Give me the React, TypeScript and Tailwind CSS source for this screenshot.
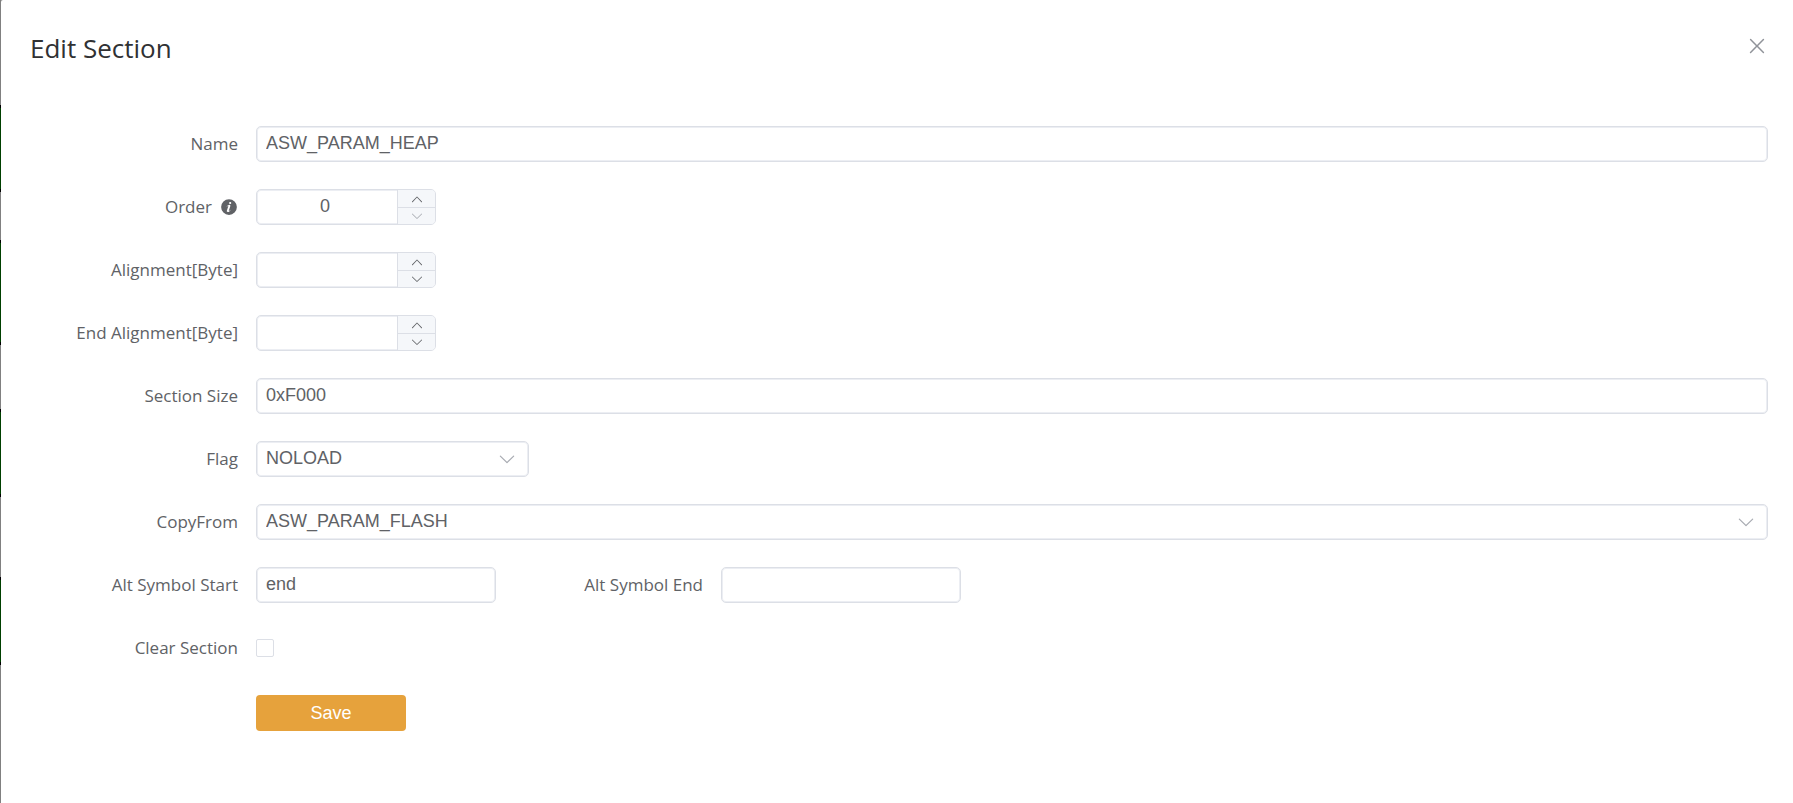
import React, { useState } from 'react';
import { clsx } from 'clsx';

const ICONS = {
  down: 'M831.872 340.864 512 652.672 192.128 340.864a30.592 30.592 0 0 0-42.752 0 29.12 29.12 0 0 0 0 41.6L489.664 714.24a32 32 0 0 0 44.672 0l340.288-331.712a29.12 29.12 0 0 0 0-41.728 30.592 30.592 0 0 0-42.752 0z',
  up: 'm488.832 344.32-339.84 356.672a32 32 0 0 0 0 44.16l.384.384a29.44 29.44 0 0 0 42.688 0l320-335.872 319.872 335.872a29.44 29.44 0 0 0 42.688 0l.384-.384a32 32 0 0 0 0-44.16L535.168 344.32a32 32 0 0 0-46.336 0z',
  close: 'M764.288 214.592 512 466.88 259.712 214.592a31.936 31.936 0 0 0-45.12 45.12L466.752 512 214.528 764.224a31.936 31.936 0 1 0 45.12 45.184L512 557.184l252.288 252.288a31.936 31.936 0 0 0 45.12-45.12L557.12 512.064l252.288-252.352a31.936 31.936 0 1 0-45.12-45.184z',
  info: 'M512 64a448 448 0 1 1 0 896.064A448 448 0 0 1 512 64m67.2 275.072c33.28 0 60.288-23.104 60.288-57.344s-27.072-57.344-60.288-57.344c-33.28 0-60.16 23.104-60.16 57.344s26.88 57.344 60.16 57.344M590.912 699.2c0-6.848 2.368-24.64 1.024-34.752l-52.608 60.544c-10.88 11.456-24.512 19.392-30.912 17.28a12.992 12.992 0 0 1-8.256-14.72l87.68-276.992c7.168-35.136-12.544-67.2-54.336-71.296-44.096 0-108.992 44.736-148.48 101.504 0 6.784-1.28 23.68.064 33.792l52.544-60.608c10.88-11.328 23.552-19.328 29.952-17.152a12.8 12.8 0 0 1 7.808 16.128L388.48 728.576c-10.048 32.256 8.96 63.872 55.04 71.04 67.84 0 107.904-43.648 147.456-100.416z',
};

function Icon({ name, className }: { name: keyof typeof ICONS; className?: string }) {
  return (
    <svg viewBox="0 0 1024 1024" fill="currentColor" aria-hidden="true" className={className}>
      <path d={ICONS[name]} />
    </svg>
  );
}

const control = "h-9 rounded-[5px] border border-[#dcdfe6] bg-white inset-shadow-[0_0_0_1px_#eceef3] outline-none focus:border-[#409eff] font-['Liberation_Sans',Arial,sans-serif] text-lg text-[#606266]";

function Row({ label, htmlFor, info, children }: { label?: string; htmlFor?: string; info?: boolean; children: React.ReactNode }) {
  return (
    <div className="flex min-h-9 items-center gap-[18px]">
      <div className="flex w-[212px] shrink-0 items-center justify-end gap-2">
        {label && <label htmlFor={htmlFor}>{label}</label>}
        {info && <Icon name="info" className="size-[18px]" />}
      </div>
      {children}
    </div>
  );
}

function TextInput({ id, initial = '', className }: { id: string; initial?: string; className?: string }) {
  const [value, setValue] = useState(initial);
  return (
    <input id={id} type="text" value={value} onChange={(e) => setValue(e.target.value)} className={clsx(control, 'px-[9px] pb-[2px]', className)} />
  );
}

function NumberInput({ id, initial = '' }: { id: string; initial?: string }) {
  const [value, setValue] = useState(initial);
  const atMin = value !== '' && Number(value) <= 0;

  const step = (delta: number) => setValue(String(Math.max(0, Number(value) + delta)));

  return (
    <div className={clsx(control, 'flex w-[180px] overflow-hidden')}>
      <input
        id={id}
        type="text"
        inputMode="numeric"
        value={value}
        onChange={(e) => setValue(e.target.value)}
        className="min-w-0 flex-1 pb-[2px] pr-1 text-center outline-none"
      />
      <div className="flex w-[38px] flex-col border-l border-[#dcdfe6] bg-[#f5f7fa]">
        <button type="button" aria-label="Increase" onClick={() => step(1)} className="flex h-[18px] items-center justify-center border-b border-[#dcdfe6] pt-px">
          <Icon name="up" className="size-3.5" />
        </button>
        <button
          type="button"
          aria-label="Decrease"
          disabled={atMin}
          onClick={() => step(-1)}
          className="flex flex-1 items-center justify-center pb-px disabled:text-[#a8abb2]"
        >
          <Icon name="down" className="size-3.5" />
        </button>
      </div>
    </div>
  );
}

function Select({ id, options, className }: { id: string; options: string[]; className?: string }) {
  return (
    <div className={clsx('relative', className)}>
      <select id={id} className={clsx(control, 'w-full appearance-none pl-[9px] pr-10 pb-[2px]')}>
        {options.map((o) => (
          <option key={o}>{o}</option>
        ))}
      </select>
      <Icon name="down" className="pointer-events-none absolute right-3 top-2 size-5 text-[#a8abb2]" />
    </div>
  );
}

// slice of the page behind the dialog that stays visible on the left
function Backdrop() {
  return (
    <div className="flex w-px shrink-0 flex-col bg-[#808080]" aria-hidden="true">
      <div className="mt-[105px] h-[87px] border-y-3 border-black bg-[#004000]" />
      <div className="mt-12 h-[105px] border-y-3 border-black bg-[#004000]" />
      <div className="mt-16 h-[88px] border-y-3 border-black bg-[#004000]" />
      <div className="mt-20 h-[88px] border-y-3 border-black bg-[#004000]" />
    </div>
  );
}

export default function App() {
  return (
    <div className="flex min-h-screen bg-[#808080] font-['Open_Sans','Noto_Sans',sans-serif] text-[17px] leading-6 text-[#606266]">
      <Backdrop />
      <main role="dialog" aria-labelledby="title" className="min-w-0 flex-1 rounded-tl-xs bg-white pr-[25px] pl-[25px]">
        <header className="flex items-start justify-between pt-[30px]">
          <h1 id="title" className="pl-1 text-[26px] leading-9 text-[#303133]">Edit Section</h1>
          <button type="button" aria-label="Close" className="-mr-px pt-1 text-[#909399]">
            <Icon name="close" className="size-6" />
          </button>
        </header>

        <form className="flex flex-col gap-[27px] pt-[60px]" onSubmit={(e) => e.preventDefault()}>
          <Row label="Name" htmlFor="name">
            <TextInput id="name" initial="ASW_PARAM_HEAP" className="min-w-0 flex-1" />
          </Row>
          <Row label="Order" htmlFor="order" info>
            <NumberInput id="order" initial="0" />
          </Row>
          <Row label="Alignment[Byte]" htmlFor="align">
            <NumberInput id="align" />
          </Row>
          <Row label="End Alignment[Byte]" htmlFor="end-align">
            <NumberInput id="end-align" />
          </Row>
          <Row label="Section Size" htmlFor="size">
            <TextInput id="size" initial="0xF000" className="min-w-0 flex-1" />
          </Row>
          <Row label="Flag" htmlFor="flag">
            <Select id="flag" options={['NOLOAD']} className="w-[273px]" />
          </Row>
          <Row label="CopyFrom" htmlFor="copy-from">
            <Select id="copy-from" options={['ASW_PARAM_FLASH']} className="min-w-0 flex-1" />
          </Row>
          <div className="flex">
            <Row label="Alt Symbol Start" htmlFor="alt-start">
              <TextInput id="alt-start" initial="end" className="w-60" />
            </Row>
            <div className="-ml-[5px]">
              <Row label="Alt Symbol End" htmlFor="alt-end">
                <TextInput id="alt-end" className="w-60" />
              </Row>
            </div>
          </div>
          <Row label="Clear Section" htmlFor="clear">
            <input id="clear" type="checkbox" className="size-[18px] appearance-none rounded-xs border border-[#dcdfe6] bg-white checked:border-[#409eff] checked:bg-[#409eff]" />
          </Row>
          <div className="pt-0.5">
            <Row>
              <button type="submit" className="h-9 w-[150px] rounded bg-[#e6a23c] font-['Liberation_Sans',Arial,sans-serif] text-lg text-white">
                Save
              </button>
            </Row>
          </div>
        </form>
      </main>
    </div>
  );
}
